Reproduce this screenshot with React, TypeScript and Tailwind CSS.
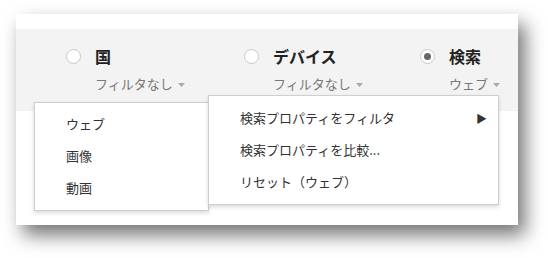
import { ReactNode } from "react"

const font = { fontFamily: '"Noto Sans CJK JP", "Noto Sans", sans-serif' }

function Radio({ checked }: { checked?: boolean }) {
   return (
      <span className="w-[15px] h-[15px] rounded-full border border-[#c8c8c8] bg-white flex items-center justify-center shrink-0 mt-[3px]">
         {checked && <span className="w-[7px] h-[7px] rounded-full bg-[#666]"></span>}
      </span>
   )
}

function Caret() {
   return (
      <svg width="7" height="4" viewBox="0 0 7 4" className="ml-[5px] mt-[2px]">
         <path d="M0 0 L7 0 L3.5 4 Z" fill="#aaa" />
      </svg>
   )
}

function Column({ title, sub, checked, width }: { title: string; sub: string; checked?: boolean; width: string }) {
   return (
      <div className={`flex items-start gap-[14px] ${width}`}>
         <Radio checked={checked} />
         <div className="flex flex-col">
            <span className="text-[16px] leading-[20px] font-bold text-[#222]">{title}</span>
            <span className="flex items-center text-[13px] leading-[18px] text-[#777] mt-[9px]">
               {sub}
               <Caret />
            </span>
         </div>
      </div>
   )
}

function Item({ children }: { children: ReactNode }) {
   return <div className="h-[32px] flex items-center text-[13px] text-[#333]">{children}</div>
}

export default function App() {
   return (
      <div className="w-[548px] h-[258px] bg-white overflow-hidden pt-[14px] pl-[16px]" style={font}>
         <div className="relative w-[502px] h-[211px] bg-white pt-[15px] shadow-[7px_10px_18px_rgba(0,0,0,0.55)]">
            <div className="h-[82px] bg-[#f3f3f3] pl-[50px] pt-[17px] flex">
               <Column title="国" sub="フィルタなし" width="w-[178px]" />
               <Column title="デバイス" sub="フィルタなし" width="w-[176px]" />
               <Column title="検索" sub="ウェブ" checked width="w-[90px]" />
            </div>

            <div className="absolute left-[18px] top-[88px] w-[175px] h-[109px] bg-white border border-[#cfcfcf] shadow-[0_2px_4px_rgba(0,0,0,0.15)] pl-[31px] pt-[5px]">
               <Item>ウェブ</Item>
               <Item>画像</Item>
               <Item>動画</Item>
            </div>

            <div className="absolute left-[192px] top-[81px] w-[291px] h-[110px] bg-white border border-[#cfcfcf] shadow-[0_2px_4px_rgba(0,0,0,0.15)] pl-[31px] pr-[11px] pt-[6px]">
               <Item>
                  <span className="flex-1">検索プロパティをフィルタ</span>
                  <span className="text-[11px] text-[#333]">▶</span>
               </Item>
               <Item>検索プロパティを比較...</Item>
               <Item>リセット（ウェブ）</Item>
            </div>
         </div>
      </div>
   )
}
